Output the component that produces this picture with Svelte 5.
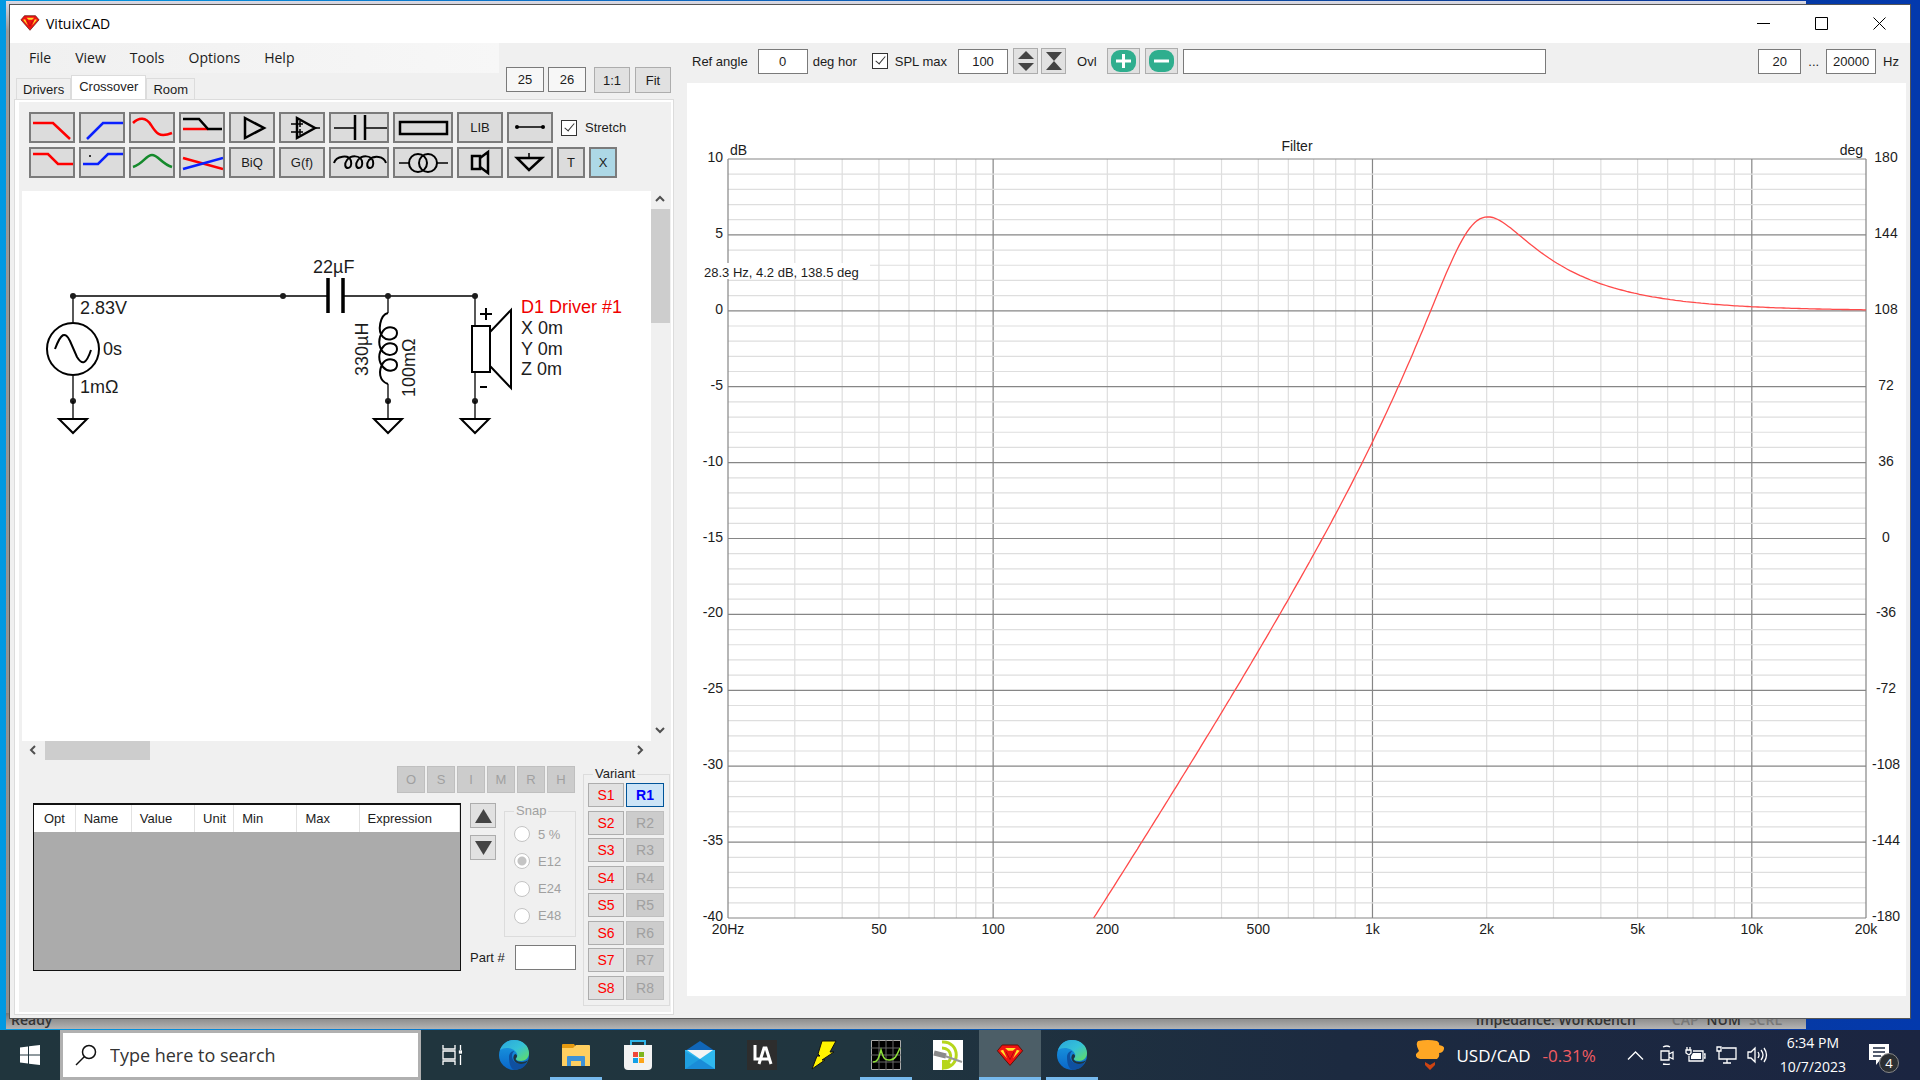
<script lang="ts">
  const menus = ['File', 'View', 'Tools', 'Options', 'Help']
  const tabs = ['Drivers', 'Crossover', 'Room']
  const partButtons = ['O', 'S', 'I', 'M', 'R', 'H']
  const snaps = ['5 %', 'E12', 'E24', 'E48']
  const variants = [1, 2, 3, 4, 5, 6, 7, 8]
  const columns = [
    { name: 'Opt', width: 41 },
    { name: 'Name', width: 56 },
    { name: 'Value', width: 63 },
    { name: 'Unit', width: 39 },
    { name: 'Min', width: 63 },
    { name: 'Max', width: 62 },
    { name: 'Expression', width: 100 }
  ]

  let activeTab = $state('Crossover')
  let snap = $state('E12')

  // chart size follows its panel
  let chartW = $state(1219)
  let chartH = $state(913)
  const left = 41
  const top = 76
  let plotW = $derived(chartW - left - 40)
  let plotH = $derived(chartH - top - 78)

  const fx = (f: number) => left + (Math.log10(f / 20) / 3) * plotW
  const dy = (db: number) => top + ((10 - db) / 50) * plotH

  const freqs: number[] = []
  for (const decade of [10, 100, 1000, 10000]) {
    for (let i = 1; i < 10; i++) {
      const f = i * decade
      if (f > 20 && f < 20000) freqs.push(f)
    }
  }
  const levels = Array.from({ length: 51 }, (_, i) => 10 - i)
  const majors = levels.filter((l) => l % 5 === 0)
  const xLabels: [number, string][] = [
    [20, '20Hz'], [50, '50'], [100, '100'], [200, '200'], [500, '500'],
    [1000, '1k'], [2000, '2k'], [5000, '5k'], [10000, '10k'], [20000, '20k']
  ]

  // second order high pass: 22uF in series, 330uH + 0.1 ohm across 8 ohm
  function response(f: number) {
    const w = 2 * Math.PI * f
    const lr = 0.1
    const li = w * 330e-6
    const den = (lr + 8) ** 2 + li ** 2
    const zr = (8 * lr * (lr + 8) + 8 * li * li) / den
    const zi = (8 * li * (lr + 8) - 8 * lr * li) / den
    const ti = zi - 1 / (w * 22e-6)
    return 20 * Math.log10(Math.hypot(zr, zi) / Math.hypot(zr + 0.001, ti))
  }

  let curve = $derived.by(() => {
    const pts: string[] = []
    for (let i = 0; i <= 300; i++) {
      const f = 184 * Math.pow(20000 / 184, i / 300)
      pts.push(`${fx(f).toFixed(1)},${Math.min(dy(response(f)), top + plotH).toFixed(1)}`)
    }
    return pts.join(' ')
  })
</script>

{#snippet edge()}
  <svg width="30" height="30" viewBox="0 0 30 30">
    <defs>
      <linearGradient id="edgeTop" x1="0" y1="0" x2="1" y2="1">
        <stop offset="0" stop-color="#2aa6dc" />
        <stop offset=".5" stop-color="#35c1d8" />
        <stop offset="1" stop-color="#66e05a" />
      </linearGradient>
      <linearGradient id="edgeLeft" x1="0" y1="0" x2="0" y2="1">
        <stop offset="0" stop-color="#1b9de2" />
        <stop offset="1" stop-color="#0a66c8" />
      </linearGradient>
    </defs>
    <circle cx="15" cy="15" r="15" fill="url(#edgeLeft)" />
    <path d="M1 10C4 2 10 0 15 0c9 0 15 6 15 13 0 5-4 8-8 8-3 0-5-1-5-2s2-2 1-5c-2-6-12-8-17-4z" fill="url(#edgeTop)" />
    <path d="M10 17c0-4 3-6 5-6-5 6 0 13 7 13 3 0 5-1 6-1-3 5-8 7-13 7-4-2-5-8-5-13z" fill="#0f50a0" />
    <path d="M16 14c1 0 2 1 2 2 0 2-2 2-1 4 1 1 3 2 6 2 2 0 5-1 6-2-1 3-4 4-7 4-6 0-10-6-6-10z" fill="#1f3440" />
  </svg>
{/snippet}

{#snippet shield(size: number)}
  <svg width={size} height={size * 0.8} viewBox="0 0 28 23">
    <path d="M6 1h16l5 6-13 15L1 7z" fill="#f01212" stroke="#5a1208" />
    <path d="M9 4h11l-3 3h-5zM4 7l3-1 4 9zM24 7l-3-1-4 9z" fill="#ffe02a" />
    <path d="M10 8l4 8 4-8" fill="none" stroke="#b00c0c" />
  </svg>
{/snippet}

{#snippet tool(label: string, icon: any, wide = false)}
  <button class="tool" class:wide aria-label={label} title={label}>
    {#if wide}
      <svg width="56" height="27" viewBox="2 2 56 27">{@render icon()}</svg>
    {:else}
      <svg width="42" height="27" viewBox="2 2 42 27">{@render icon()}</svg>
    {/if}
  </button>
{/snippet}

{#snippet lowpass()}<path class="red" d="M4 11H24L41 27" />{/snippet}
{#snippet highpass()}<path class="blue" d="M8 27L24 11H44" />{/snippet}
{#snippet lowshelfQ()}<path class="red" d="M4 11C10 5 17 5 22 13C27 21 30 26 43 21" />{/snippet}
{#snippet delay()}
  <path class="red" d="M4 17H29" /><path class="ink" d="M4 7H20L29 17H43" />
{/snippet}
{#snippet buffer()}<path class="ink" d="M16 6L35 16L16 26Z" />{/snippet}
{#snippet opamp()}
  <path class="ink" d="M18 6L36 16L18 26Z" />
  <path class="thin" d="M12 12h12M12 20h12M21 9v6M21 17v6M36 16h5" />
{/snippet}
{#snippet capacitor()}
  <path class="thin" d="M5 16H26M36 16H58" /><path class="ink" d="M26 3V28M36 3V28" />
{/snippet}
{#snippet resistor()}<rect class="ink" x="7" y="10" width="47" height="12" />{/snippet}
{#snippet wire()}
  <path class="thin" d="M10 15H36" /><circle cx="10" cy="15" r="2" /><circle cx="36" cy="15" r="2" />
{/snippet}
{#snippet lowshelf()}<path class="red" d="M4 7H19L29 17H44" />{/snippet}
{#snippet highshelf()}
  <path class="blue" d="M4 17H19L29 7H44" /><circle cx="11" cy="9" r="1" />
{/snippet}
{#snippet bell()}<path class="green" d="M4 20C14 17 17 8 23 8S33 17 43 20" />{/snippet}
{#snippet cross()}<path class="red" d="M4 11L44 22" /><path class="blue" d="M4 22L44 11" />{/snippet}
{#snippet inductor()}
  <path class="ink coil" d="M5 16C7 9 20 7 22 14C23 19 21 21 19 21C16 21 15 17 18 13C22 8 31 8 33 14C34 19 32 21 30 21C27 21 26 17 29 13C33 8 42 8 44 14C45 19 43 21 41 21C38 21 37 17 40 13C45 8 55 9 57 16" />
{/snippet}
{#snippet transformer()}
  <path class="thin" d="M6 16H16M44 16H55" />
  <circle class="ink coil" cx="25" cy="16" r="9" /><circle class="ink coil" cx="35" cy="16" r="9" />
{/snippet}
{#snippet driver()}
  <rect class="ink" x="15" y="9" width="8" height="13" /><path class="ink" d="M23 11L31 5V26L23 20" />
{/snippet}
{#snippet ground()}<path class="ink" d="M10 11H35L22 23Z" /><path class="thin" d="M22 6V11" />{/snippet}

{#snippet gnd(x: number)}
  <circle cx={x} cy="210" r="3" />
  <path class="wire" d="M{x} 210V227" />
  <path class="part" d="M{x - 14} 228h28l-14 14z" />
{/snippet}

<div class="desktop">
  <div class="stage">
    <div class="back-window">
      <div class="back-status">
        <span>Ready</span>
        <span class="mode">Impedance: Workbench</span>
        <span class="off">CAP</span><span>NUM</span><span class="off">SCRL</span>
      </div>
    </div>

    <main class="window">
      <header class="title">
        {@render shield(20)}
        <span>VituixCAD</span>
        <div class="controls">
          <button aria-label="Minimize"><svg width="13" height="13"><path d="M0 6.5h13" /></svg></button>
          <button aria-label="Maximize"><svg width="13" height="13"><path d="M.5 .5h12v12h-12z" /></svg></button>
          <button aria-label="Close"><svg width="13" height="13"><path d="M.5 .5l12 12M12.5 .5l-12 12" /></svg></button>
        </div>
      </header>

      <div class="body">
        <section class="left">
          <div class="left-head">
            <div class="nav">
              <nav class="menu">
                {#each menus as item}<button>{item}</button>{/each}
              </nav>
              <div class="tabs">
                {#each tabs as tab}
                  <button class:active={tab === activeTab} onclick={() => (activeTab = tab)}>{tab}</button>
                {/each}
              </div>
            </div>
            <div class="size">
              <input class="dim" aria-label="Columns" value="25" />
              <input class="dim" aria-label="Rows" value="26" />
              <button class="zoom">1:1</button>
              <button class="zoom">Fit</button>
            </div>
          </div>

          <div class="page">
            <div class="tools">
              <div class="row">
                {@render tool('Low pass', lowpass)}
                {@render tool('High pass', highpass)}
                {@render tool('Low shelf Q', lowshelfQ)}
                {@render tool('Delay', delay)}
                {@render tool('Buffer', buffer)}
                {@render tool('Op-amp', opamp)}
                {@render tool('Capacitor', capacitor, true)}
                {@render tool('Resistor', resistor, true)}
                <button class="tool">LIB</button>
                {@render tool('Wire', wire)}
                <label class="check"><input type="checkbox" checked /> Stretch</label>
              </div>
              <div class="row">
                {@render tool('Low shelf', lowshelf)}
                {@render tool('High shelf', highshelf)}
                {@render tool('Peak', bell)}
                {@render tool('All pass', cross)}
                <button class="tool">BiQ</button>
                <button class="tool">G(f)</button>
                {@render tool('Inductor', inductor, true)}
                {@render tool('Transformer', transformer, true)}
                {@render tool('Driver', driver)}
                {@render tool('Ground', ground)}
                <button class="tool small">T</button>
                <button class="tool small on">X</button>
              </div>
            </div>

            <div class="canvas">
              <svg class="schematic" width="628" height="300">
                <path class="wire" d="M51 131V105H306M322 105H453V135M366 105V122M366 193V210M453 181V210M51 185V210" />
                {#each [51, 261, 366, 453] as x}<circle cx={x} cy="105" r="3" />{/each}
                <circle class="part" cx="51" cy="158" r="26" />
                <path class="part" d="M33 158C39 142 43 140 48 150L55 166C60 174 64 174 69 159" />
                <path class="plate" d="M306 87V122M321 87V122" />
                <path class="part" d="M366 122C358 124 355 140 361 146C366 151 375 148 375 142S366 134 361 140C356 147 356 155 361 161C366 166 375 164 375 158S366 150 361 156C356 162 356 170 361 176C366 182 375 180 375 174S366 166 361 172C356 180 357 190 366 193" />
                <rect class="part" x="450" y="135" width="18" height="46" />
                <path class="part" d="M468 141L489 119V197L468 175" />
                <path class="plate sign" d="M458 123h12M464 117v12M458 196h7" />
                {@render gnd(51)}
                {@render gnd(366)}
                {@render gnd(453)}
                <text x="58" y="123">2.83V</text>
                <text x="81" y="164">0s</text>
                <text x="58" y="202">1mΩ</text>
                <text x="291" y="82">22µF</text>
                <text transform="translate(346 185) rotate(-90)">330µH</text>
                <text transform="translate(393 206) rotate(-90)">100mΩ</text>
                <text class="hot" x="499" y="122">D1 Driver #1</text>
                <text x="499" y="143">X 0m</text>
                <text x="499" y="164">Y 0m</text>
                <text x="499" y="184">Z 0m</text>
              </svg>
              <div class="vbar">
                <svg width="11" height="7"><path d="M1 6l4-4 4 4" /></svg>
                <div class="thumb"></div>
                <svg width="11" height="7"><path d="M1 1l4 4 4-4" /></svg>
              </div>
              <div class="hbar">
                <svg width="7" height="11"><path d="M6 1L2 5l4 4" /></svg>
                <div class="thumb"></div>
                <svg width="7" height="11"><path d="M1 1l4 4-4 4" /></svg>
              </div>
            </div>

            <div class="bottom">
              <div class="parts">
                <div class="part-buttons">
                  {#each partButtons as p}<button disabled>{p}</button>{/each}
                </div>
                <div class="params">
                  <div class="grid-box">
                    <table>
                      <thead>
                        <tr>
                          {#each columns as c}<th style="width: {c.width}px">{c.name}</th>{/each}
                        </tr>
                      </thead>
                    </table>
                  </div>
                  <div class="side">
                    <div class="side-top">
                      <div class="arrows">
                        <button aria-label="Up"><svg width="17" height="14"><path d="M8.5 0L17 14H0z" /></svg></button>
                        <button aria-label="Down"><svg width="17" height="14"><path d="M8.5 14L17 0H0z" /></svg></button>
                      </div>
                      <fieldset class="snap" disabled>
                        <legend>Snap</legend>
                        {#each snaps as s}
                          <label><input type="radio" name="snap" value={s} bind:group={snap} /> {s}</label>
                        {/each}
                      </fieldset>
                    </div>
                    <label class="part-no">Part # <input /></label>
                  </div>
                </div>
              </div>

              <fieldset class="variant">
                <legend>Variant</legend>
                <div class="variant-grid">
                  {#each variants as v}
                    <button class="save">S{v}</button>
                    <button class="recall" class:current={v === 1} disabled={v > 1}>R{v}</button>
                  {/each}
                </div>
              </fieldset>
            </div>
          </div>
        </section>

        <section class="right">
          <div class="bar">
            <label for="angle">Ref angle</label>
            <input id="angle" class="num angle" value="0" />
            <span class="unit">deg hor</span>
            <label class="check spl"><input type="checkbox" checked /> SPL max</label>
            <input class="num" aria-label="SPL max value" value="100" />
            <div class="spins">
              <button class="spin" aria-label="Expand range"><svg width="18" height="20"><path d="M9 0l8 8H1zM9 20l8-8H1z" /></svg></button>
              <button class="spin" aria-label="Compress range"><svg width="18" height="20"><path d="M1 1h16L9 10zM1 19h16L9 10z" /></svg></button>
            </div>
            <span class="ovl">Ovl</span>
            <button class="round" aria-label="Add overlay"><svg width="27" height="22"><rect x="1" width="25" height="22" rx="9" /><path d="M6 11h15M13.500 4v14" /></svg></button>
            <button class="round" aria-label="Remove overlay"><svg width="27" height="22"><rect x="1" width="25" height="22" rx="9" /><path d="M6 11h15" /></svg></button>
            <input class="note" aria-label="Overlay name" />
            <input class="num from" aria-label="From" value="20" />
            <span class="dots">...</span>
            <input class="num to" aria-label="To" value="20000" />
            <span class="hz">Hz</span>
          </div>

          <div class="chart" bind:clientWidth={chartW} bind:clientHeight={chartH}>
            <svg width={chartW} height={chartH}>
              {#each freqs as f}
                <path class={[100, 1000, 10000].includes(f) ? 'major' : 'minor'} d="M{fx(f)} {top}V{top + plotH}" />
              {/each}
              {#each levels as l}
                {#if l % 5 !== 0}<path class="minor" d="M{left} {dy(l)}H{left + plotW}" />{/if}
              {/each}
              {#each majors as l}
                <path class="major" d="M{left} {dy(l)}H{left + plotW}" />
                <text x={left - 5} y={dy(l) + 3} text-anchor="end">{l}</text>
                <text x={left + plotW + 20} y={dy(l) + 3} text-anchor="middle">{(l + 15) * 7.2}</text>
              {/each}
              <path class="major" d="M{left} {top}v{plotH}M{left + plotW} {top}v{plotH}" />
              {#each xLabels as [f, name]}
                <text x={fx(f)} y={top + plotH + 16} text-anchor="middle">{name}</text>
              {/each}
              <text x={left + 2} y={top - 4}>dB</text>
              <text x={left + plotW - 3} y={top - 4} text-anchor="end">deg</text>
              <text x={left + plotW / 2} y={top - 8} text-anchor="middle">Filter</text>
              <polyline points={curve} />
              <rect x="17" y="180" width="166" height="16" fill="#fff" />
              <text class="cursor" x="17" y="194">28.3 Hz, 4.2 dB, 138.5 deg</text>
            </svg>
          </div>
        </section>
      </div>
    </main>
  </div>

  <footer class="taskbar">
    <button class="start" aria-label="Start">
      <svg width="20" height="20" viewBox="0 0 20 20"><path d="M0 2.500l8-1V9.500H0zM9 1.300L20 0v9.500H9zM0 10.500h8v8l-8-1zM9 10.500h11V20L9 18.700z" fill="#fff" /></svg>
    </button>
    <label class="search">
      <svg width="22" height="22" viewBox="0 0 22 22"><circle cx="14" cy="8" r="6.500" /><path d="M9.500 12.500L1 21" /></svg>
      <input placeholder="Type here to search" />
    </label>
    <button class="app" aria-label="Task view">
      <svg width="20" height="20" viewBox="0 0 20 20" fill="none" stroke="#fff" stroke-width="1.300"><path d="M1 0v4h12V0M1 6h12v8H1zM1 20v-4h12v4M18.500 0v5M18.500 10v10" /><rect x="17.500" y="6" width="2" height="2" /></svg>
    </button>
    <button class="app" aria-label="Edge">{@render edge()}</button>
    <button class="app open" aria-label="File Explorer">
      <svg width="28" height="24" viewBox="0 0 28 24">
        <path d="M0 2q0-1 1-1h11l2 3h13v18H0z" fill="#e59a10" /><path d="M0 5h11l3-3h13q1 0 1 1v20H0z" fill="#ffcf60" />
        <path d="M5 23V14q0-1 1-1h16q1 0 1 1v9h-4v-5H9v5z" fill="#3f92d6" />
      </svg>
    </button>
    <button class="app" aria-label="Store">
      <svg width="30" height="30" viewBox="0 0 30 30">
        <path d="M8 6V1h14v5" fill="none" stroke="#2fb4e8" stroke-width="2" /><path d="M1 5h28v21q0 4-4 4H5q-4 0-4-4z" fill="#f2f2f2" />
        <path d="M10 12h5v5h-5z" fill="#f0473a" /><path d="M16 12h5v5h-5z" fill="#7eb51e" /><path d="M10 18h5v5h-5z" fill="#12a0e8" /><path d="M16 18h5v5h-5z" fill="#fca419" />
      </svg>
    </button>
    <button class="app" aria-label="Mail">
      <svg width="30" height="28" viewBox="0 0 30 28">
        <path d="M0 10L15 0l15 10z" fill="#1066b8" /><path d="M0 9h30v19H0z" fill="#2fb8ee" /><path d="M0 10l15 9L0 28z" fill="#1f9fe0" /><path d="M0 28l15-10 15 10z" fill="#1a8cd8" /><path d="M2 9h26l-13 9z" fill="#f4f4f4" />
      </svg>
    </button>
    <button class="app" aria-label="LA">
      <svg width="30" height="30" viewBox="0 0 30 30"><path d="M0 0h30v30H0z" fill="#2d2d2d" /><path d="M8 5v14h5M12 24L17 8h2l5 16M14 19h8" fill="none" stroke="#fff" stroke-width="3" /></svg>
    </button>
    <button class="app" aria-label="LTspice">
      <svg width="28" height="30" viewBox="0 0 28 30"><path d="M12 1h14l-6 11h4L12 20h3L2 29l5-13H10L8 14z" fill="#fff200" stroke="#111" /></svg>
    </button>
    <button class="app open" aria-label="Analyzer">
      <svg width="30" height="30" viewBox="0 0 30 30"><path d="M.5 .5h29v29H.5z" stroke="#aaa" /><path d="M8 0v30M15 0v30M22 0v30M0 8h30M0 15h30M0 22h30" stroke="#666" /><path d="M2 22c5 0 6-5 8-12 3 11 5 10 9 10 5 0 7-5 10-12" fill="none" stroke="#8ee03a" stroke-width="1.500" /></svg>
    </button>
    <button class="app" aria-label="REW">
      <svg width="30" height="30" viewBox="0 0 30 30"><path d="M0 0h30v30H0z" fill="#fff" /><path d="M9 2c19-1 19 27 0 26M9 8c11 0 11 15 3 15" fill="none" stroke="#b6d61c" stroke-width="3" /><path d="M9 20h5l5 5-10 5z" fill="#b6d61c" /><path d="M1 13l12 3" stroke="#8a8a8a" stroke-width="5" /><path d="M12 16l17 6" stroke="#999" stroke-width="2" /></svg>
    </button>
    <button class="app open active" aria-label="VituixCAD">{@render shield(28)}</button>
    <button class="app open" aria-label="Edge window">{@render edge()}</button>

    <div class="tray">
      <button class="news">
        <svg width="28" height="30" viewBox="0 0 28 30"><path d="M2 1q10-2 19 0 3 2 2 4 6 1 5 4-1 4-5 4 1 4-2 6H4q-5-1-4-5l3-3q-4-7-1-10z" fill="#ffa724" /><path d="M9 22l5 3 5-3v3l-5 5-5-5z" fill="#cf4412" /></svg>
        <span>USD/CAD</span><span class="down">-0.31%</span>
      </button>
      <svg width="17" height="9" viewBox="0 0 17 9"><path d="M1 8.500l7.500-7.500L16 8.500" /></svg>
      <svg class="cam" width="16" height="20" viewBox="0 0 16 20"><path d="M2 6h8v9H2zM10 9l4-2v7l-4-2M4 2q4-2 7 0M4 19q4 1 7 0" /></svg>
      <svg width="21" height="16" viewBox="0 0 21 16"><path d="M8 4h10v10H4V9M19 7h1v4h-1M1 3h5v3l-2 2-3-2zM2 0v3M5 0v3" /><path d="M8 6h8v6H6V9z" fill="#fff" stroke="none" /></svg>
      <svg width="21" height="18" viewBox="0 0 21 18"><path d="M6 2h14v11H3V7M11 13v4M7 17h8M1 1h4v4H1zM3 5v3" /></svg>
      <svg width="21" height="18" viewBox="0 0 21 18"><path d="M1 6h3l4-4v14l-4-4H1zM11 6q2 3 0 6M14 4q4 5 0 10M17 2q5 7 0 14" /></svg>
      <div class="clock"><time>6:34 PM</time><time>10/7/2023</time></div>
      <button class="notice" aria-label="Notifications">
        <svg width="20" height="22" viewBox="0 0 20 22"><path d="M0 0h20v16h-9l-4 5v-5H0z" fill="#fff" stroke="none" /><path d="M4 4h12M4 8h12M4 12h8" stroke="#1c2840" /></svg>
        <span class="badge">4</span>
      </button>
    </div>
  </footer>
</div>

<style>
  :global(body) {
    overflow: hidden;
  }

  .desktop {
    display: flex;
    flex-direction: column;
    height: 100vh;
    background: linear-gradient(90deg, #0099e2 0%, #0d6cc4 30%, #0a3a94 80%, #0339ad 100%);
    font-family: 'Liberation Sans', Arial, sans-serif;
    font-size: 13px;
    color: #1c1c1c;
  }

  button,
  input {
    font: inherit;
    color: inherit;
    box-sizing: border-box;
    margin: 0;
    padding: 0;
  }

  button {
    border: none;
    background: none;
  }

  svg {
    display: block;
    flex: none;
  }

  .stage {
    position: relative;
    flex: 1;
    min-height: 0;
  }

  .back-window {
    position: absolute;
    top: 1px;
    right: 114px;
    bottom: 1px;
    left: 6px;
    display: flex;
    flex-direction: column;
    justify-content: flex-end;
    background: linear-gradient(#d9d9e4, #999 30px, #8e8e8e);
  }

  .back-status {
    display: flex;
    gap: 8px;
    height: 16px;
    padding: 0 24px 0 5px;
    background: linear-gradient(#777, #b4b4b4);
    font-weight: 600;
    font-family: 'Open Sans', sans-serif;
    font-size: 14px;
    line-height: 14px;
    color: #333;
  }

  .mode {
    margin-left: auto;
    margin-right: 28px;
  }

  .off {
    color: #777;
  }

  .window {
    position: absolute;
    top: 4px;
    right: 9px;
    bottom: 11px;
    left: 9px;
    display: flex;
    flex-direction: column;
    border: 1px solid #555;
    background: #f0f0f0;
  }

  .title {
    display: flex;
    align-items: center;
    gap: 6px;
    height: 38px;
    box-sizing: border-box;
    padding: 0 2px 2px 10px;
    background: #fff;
    font-family: 'Open Sans', sans-serif;
    font-size: 14px;
    color: #000;
  }

  .controls {
    display: flex;
    height: 100%;
    margin-left: auto;
  }

  .controls button {
    display: grid;
    place-items: center;
    width: 58px;
  }

  .controls svg {
    fill: none;
    stroke: #000;
  }

  .body {
    flex: 1;
    min-height: 0;
    display: grid;
    grid-template-columns: 677px 1fr;
  }

  .left {
    display: flex;
    flex-direction: column;
    min-height: 0;
    padding: 0 14px 4px 5px;
  }

  .left-head {
    display: flex;
    height: 57px;
  }

  .nav {
    display: flex;
    flex-direction: column;
    justify-content: space-between;
    width: 484px;
  }

  .menu {
    display: flex;
    gap: 24px;
    height: 30px;
    box-sizing: border-box;
    padding: 0 0 2px 14px;
    background: linear-gradient(90deg, #f0f0f0, #f7f7f7);
    font-family: 'Open Sans', sans-serif;
    font-size: 14px;
  }

  .tabs {
    display: flex;
    align-items: flex-end;
    padding-left: 1px;
  }

  .tabs button {
    height: 22px;
    padding: 0 6px;
    border: 1px solid #dcdcdc;
    border-bottom: none;
  }

  .tabs .active {
    height: 25px;
    padding: 0 7px 3px;
    background: #fff;
  }

  .size {
    display: flex;
    gap: 4px;
    margin-left: auto;
    padding: 24px 2px 0 0;
  }

  .dim,
  .num,
  .note,
  .part-no input {
    height: 25px;
    border: 1px solid #7a7a7a;
    background: #fff;
    text-align: center;
  }

  .dim {
    width: 38px;
    background: #f7f7f7;
  }

  .zoom {
    width: 36px;
    height: 26px;
    border: 1px solid #adadad;
    background: #e1e1e1;
  }

  .dim + .zoom {
    margin: 0 1px 0 4px;
  }

  .page {
    flex: 1;
    min-height: 0;
    display: flex;
    flex-direction: column;
    border: 2px solid #fff;
    border-left-width: 4px;
    outline: 1px solid #dcdcdc;
  }

  .tools {
    display: flex;
    flex-direction: column;
    gap: 4px;
    padding: 10px 0 13px 10px;
  }

  .row {
    display: flex;
    gap: 4px;
  }

  .tool {
    display: grid;
    place-items: center;
    width: 46px;
    height: 31px;
    border: 2px solid #7b7b7b;
    background: #dcdcdc;
  }

  .wide {
    width: 60px;
  }

  .small {
    width: 28px;
  }

  .on {
    background: #add8e6;
  }

  .red,
  .blue,
  .green,
  .ink,
  .thin {
    fill: none;
    stroke-width: 2.5;
  }

  .red {
    stroke: #f00;
  }

  .blue {
    stroke: #0a20ff;
  }

  .green {
    stroke: #158a2c;
  }

  .ink {
    stroke: #000;
  }

  .coil {
    stroke-width: 2;
  }

  .thin {
    stroke: #000;
    stroke-width: 1.5;
  }

  .check {
    display: flex;
    align-items: center;
    gap: 8px;
    padding-left: 4px;
  }

  .check input {
    appearance: none;
    width: 16px;
    height: 16px;
    border: 1px solid #333;
    background: #fff;
  }

  .check input:checked::before {
    content: '';
    display: block;
    width: 4px;
    height: 9px;
    margin: 0 0 0 5px;
    border: solid #333;
    border-width: 0 1px 1px 0;
    transform: rotate(40deg);
  }

  .canvas {
    flex: 1;
    min-height: 0;
    display: grid;
    grid-template-columns: 1fr 19px;
    grid-template-rows: 1fr 19px;
    margin: 0 1px 0 3px;
  }

  .schematic {
    width: 100%;
    height: 100%;
    background: #fff;
    font-size: 18px;
    fill: #1c1c1c;
  }

  .wire {
    fill: none;
    stroke: #000;
    stroke-width: 1.3;
  }

  .part {
    fill: none;
    stroke: #000;
    stroke-width: 2;
  }

  .plate {
    stroke: #000;
    stroke-width: 3.5;
  }

  .sign {
    stroke-width: 2;
  }

  .hot {
    fill: #f00000;
  }

  .vbar,
  .hbar {
    display: flex;
    align-items: center;
    justify-content: space-between;
  }

  .vbar {
    flex-direction: column;
    padding: 4px 0 7px;
  }

  .hbar {
    padding: 0 7px;
  }

  .vbar svg,
  .hbar svg {
    fill: none;
    stroke: #505050;
    stroke-width: 2;
  }

  .thumb {
    background: #cdcdcd;
  }

  .vbar .thumb {
    width: 100%;
    height: 114px;
    margin: 7px 0 auto;
  }

  .hbar .thumb {
    width: 105px;
    height: 100%;
    margin: 0 auto 0 9px;
  }

  .bottom {
    display: flex;
    justify-content: space-between;
    padding: 6px 1px 6px 14px;
  }

  .part-buttons {
    display: flex;
    justify-content: flex-end;
    gap: 2px;
    margin: 0 1px 10px 0;
  }

  .part-buttons button {
    width: 28px;
    height: 27px;
    border: 1px solid #bfbfbf;
    background: #ccc;
    color: #a0a0a0;
  }

  .params {
    display: flex;
    gap: 9px;
  }

  .grid-box {
    width: 428px;
    height: 168px;
    box-sizing: border-box;
    border: 1px solid #111;
    border-top-width: 2px;
    background: #ababab;
  }

  table {
    width: 100%;
    table-layout: fixed;
    border-collapse: collapse;
    background: #fff;
  }

  th {
    height: 27px;
    box-sizing: border-box;
    padding: 0 0 0 8px;
    border-right: 1px solid #e2e2e2;
    text-align: left;
    font-weight: normal;
  }

  th:first-child {
    padding-left: 10px;
  }

  .side {
    display: flex;
    flex-direction: column;
    gap: 8px;
  }

  .side-top {
    display: flex;
    gap: 8px;
  }

  .arrows {
    display: flex;
    flex-direction: column;
    gap: 7px;
  }

  .arrows button {
    display: grid;
    place-items: center;
    width: 26px;
    height: 25px;
    border: 1px solid #adadad;
    background: #e1e1e1;
    fill: #444;
  }

  fieldset {
    min-width: 0;
    margin: 0;
    box-sizing: border-box;
    border: 1px solid #dcdcdc;
  }

  legend {
    padding: 0 2px;
    line-height: 16px;
  }

  .snap {
    display: flex;
    flex-direction: column;
    justify-content: space-between;
    width: 72px;
    height: 134px;
    padding: 7px 0 12px 9px;
    color: #a0a0a0;
  }

  .snap label {
    display: flex;
    align-items: center;
    gap: 8px;
  }

  .snap input {
    appearance: none;
    width: 16px;
    height: 16px;
    border: 1px solid #c4c4c4;
    border-radius: 50%;
    background: #fff;
  }

  .snap input:checked {
    background: radial-gradient(#c4c4c4 4px, #fff 5px);
  }

  .part-no {
    display: flex;
    align-items: center;
    justify-content: space-between;
  }

  .part-no input {
    width: 61px;
  }

  .variant {
    align-self: flex-start;
    width: 87px;
    height: 240px;
    padding: 1px 4px 5px;
  }

  .variant legend {
    margin-left: 5px;
  }

  .variant-grid {
    display: grid;
    grid-template-columns: 36px 38px;
    justify-content: space-between;
    align-content: space-between;
    height: 217px;
    padding-right: 1px;
    font-size: 14px;
  }

  .variant-grid button {
    height: 24px;
    border: 1px solid #adadad;
    background: #e1e1e1;
  }

  .variant-grid .save {
    color: #f00;
  }

  .variant-grid .recall {
    border-color: #bfbfbf;
    background: #ccc;
    color: #a0a0a0;
  }

  .variant-grid .current {
    border-color: #005499;
    background: #cce4f7;
    font-weight: bold;
    color: #00f;
  }

  .right {
    display: flex;
    flex-direction: column;
    min-width: 0;
    min-height: 0;
    padding: 0 4px 22px 0;
  }

  .bar {
    display: flex;
    align-items: center;
    height: 40px;
    padding: 0 7px 4px 5px;
    box-sizing: border-box;
  }

  .num {
    width: 50px;
  }

  .angle {
    margin: 0 5px 0 10px;
  }

  .spl {
    gap: 7px;
    margin: 0 11px 0 11px;
  }

  .spins {
    display: flex;
    gap: 3px;
    margin-left: 5px;
  }

  .spin,
  .round {
    display: grid;
    place-items: center;
    height: 26px;
    border: 1px solid #adadad;
    background: #e1e1e1;
  }

  .spin {
    width: 25px;
    fill: #444;
  }

  .ovl {
    margin: 0 10px 0 11px;
  }

  .round {
    width: 33px;
    margin-right: 5px;
  }

  .round rect {
    fill: #2fae8e;
  }

  .round path {
    stroke: #fff;
    stroke-width: 3;
  }

  .note {
    flex: 1;
    max-width: 363px;
  }

  .from {
    width: 43px;
    margin-left: auto;
  }

  .dots {
    margin: 0 7px;
  }

  .hz {
    margin-left: 7px;
  }

  .chart {
    flex: 1;
    min-height: 0;
    overflow: hidden;
    background: #fff;
  }

  .chart text {
    font-size: 14px;
    fill: #1c1c1c;
  }

  .chart .cursor {
    font-size: 13px;
  }

  .minor {
    stroke: #dedede;
    stroke-width: 1.2;
  }

  .major {
    stroke: #868686;
    stroke-width: 1.2;
  }

  polyline {
    fill: none;
    stroke: #ff4a4a;
    stroke-width: 1.3;
  }

  .taskbar {
    display: flex;
    height: 50px;
    background: linear-gradient(90deg, #20353d, #20353f 45%, #1c2a40 70%, #1b2541);
    font-family: 'Open Sans', sans-serif;
    color: #fff;
  }

  .start {
    display: grid;
    place-items: center;
    width: 60px;
  }

  .search {
    display: flex;
    align-items: center;
    gap: 13px;
    width: 361px;
    box-sizing: border-box;
    padding: 0 12px;
    border: 3px solid #b0b0b0;
    background: #fff;
    font-size: 18px;
  }

  .search svg {
    fill: none;
    stroke: #111;
    stroke-width: 1.5;
  }

  .search input {
    flex: 1;
    min-width: 0;
    border: none;
    outline: none;
  }

  .search input::placeholder {
    color: #333;
    opacity: 1;
  }

  .app {
    position: relative;
    display: grid;
    place-items: center;
    width: 62px;
  }

  .open::after {
    content: '';
    position: absolute;
    right: 5px;
    bottom: 0;
    left: 5px;
    height: 3px;
    background: #76b9ed;
  }

  .active {
    background: #4c5e67;
  }

  .active::after {
    right: 0;
    left: 0;
  }

  .tray {
    display: flex;
    align-items: center;
    gap: 10px;
    margin-left: auto;
    padding-right: 20px;
  }

  .tray > svg,
  .notice svg {
    fill: none;
    stroke: #fff;
    stroke-width: 1.3;
  }

  .tray .cam {
    margin-left: 5px;
  }

  .news {
    display: flex;
    align-items: center;
    gap: 12px;
    margin-right: 21px;
    font-size: 17px;
  }

  .down {
    color: #f25c62;
  }

  .clock {
    display: flex;
    flex-direction: column;
    align-items: center;
    margin-left: 2px;
    font-size: 14px;
    line-height: 24px;
  }

  .notice {
    position: relative;
    display: block;
    width: 31px;
    margin-left: 13px;
  }

  .badge {
    position: absolute;
    top: 9px;
    left: 10px;
    width: 18px;
    height: 18px;
    border: 1px solid #888;
    border-radius: 50%;
    background: #2b2f33;
    font-size: 13px;
    line-height: 18px;
    text-align: center;
  }
</style>
